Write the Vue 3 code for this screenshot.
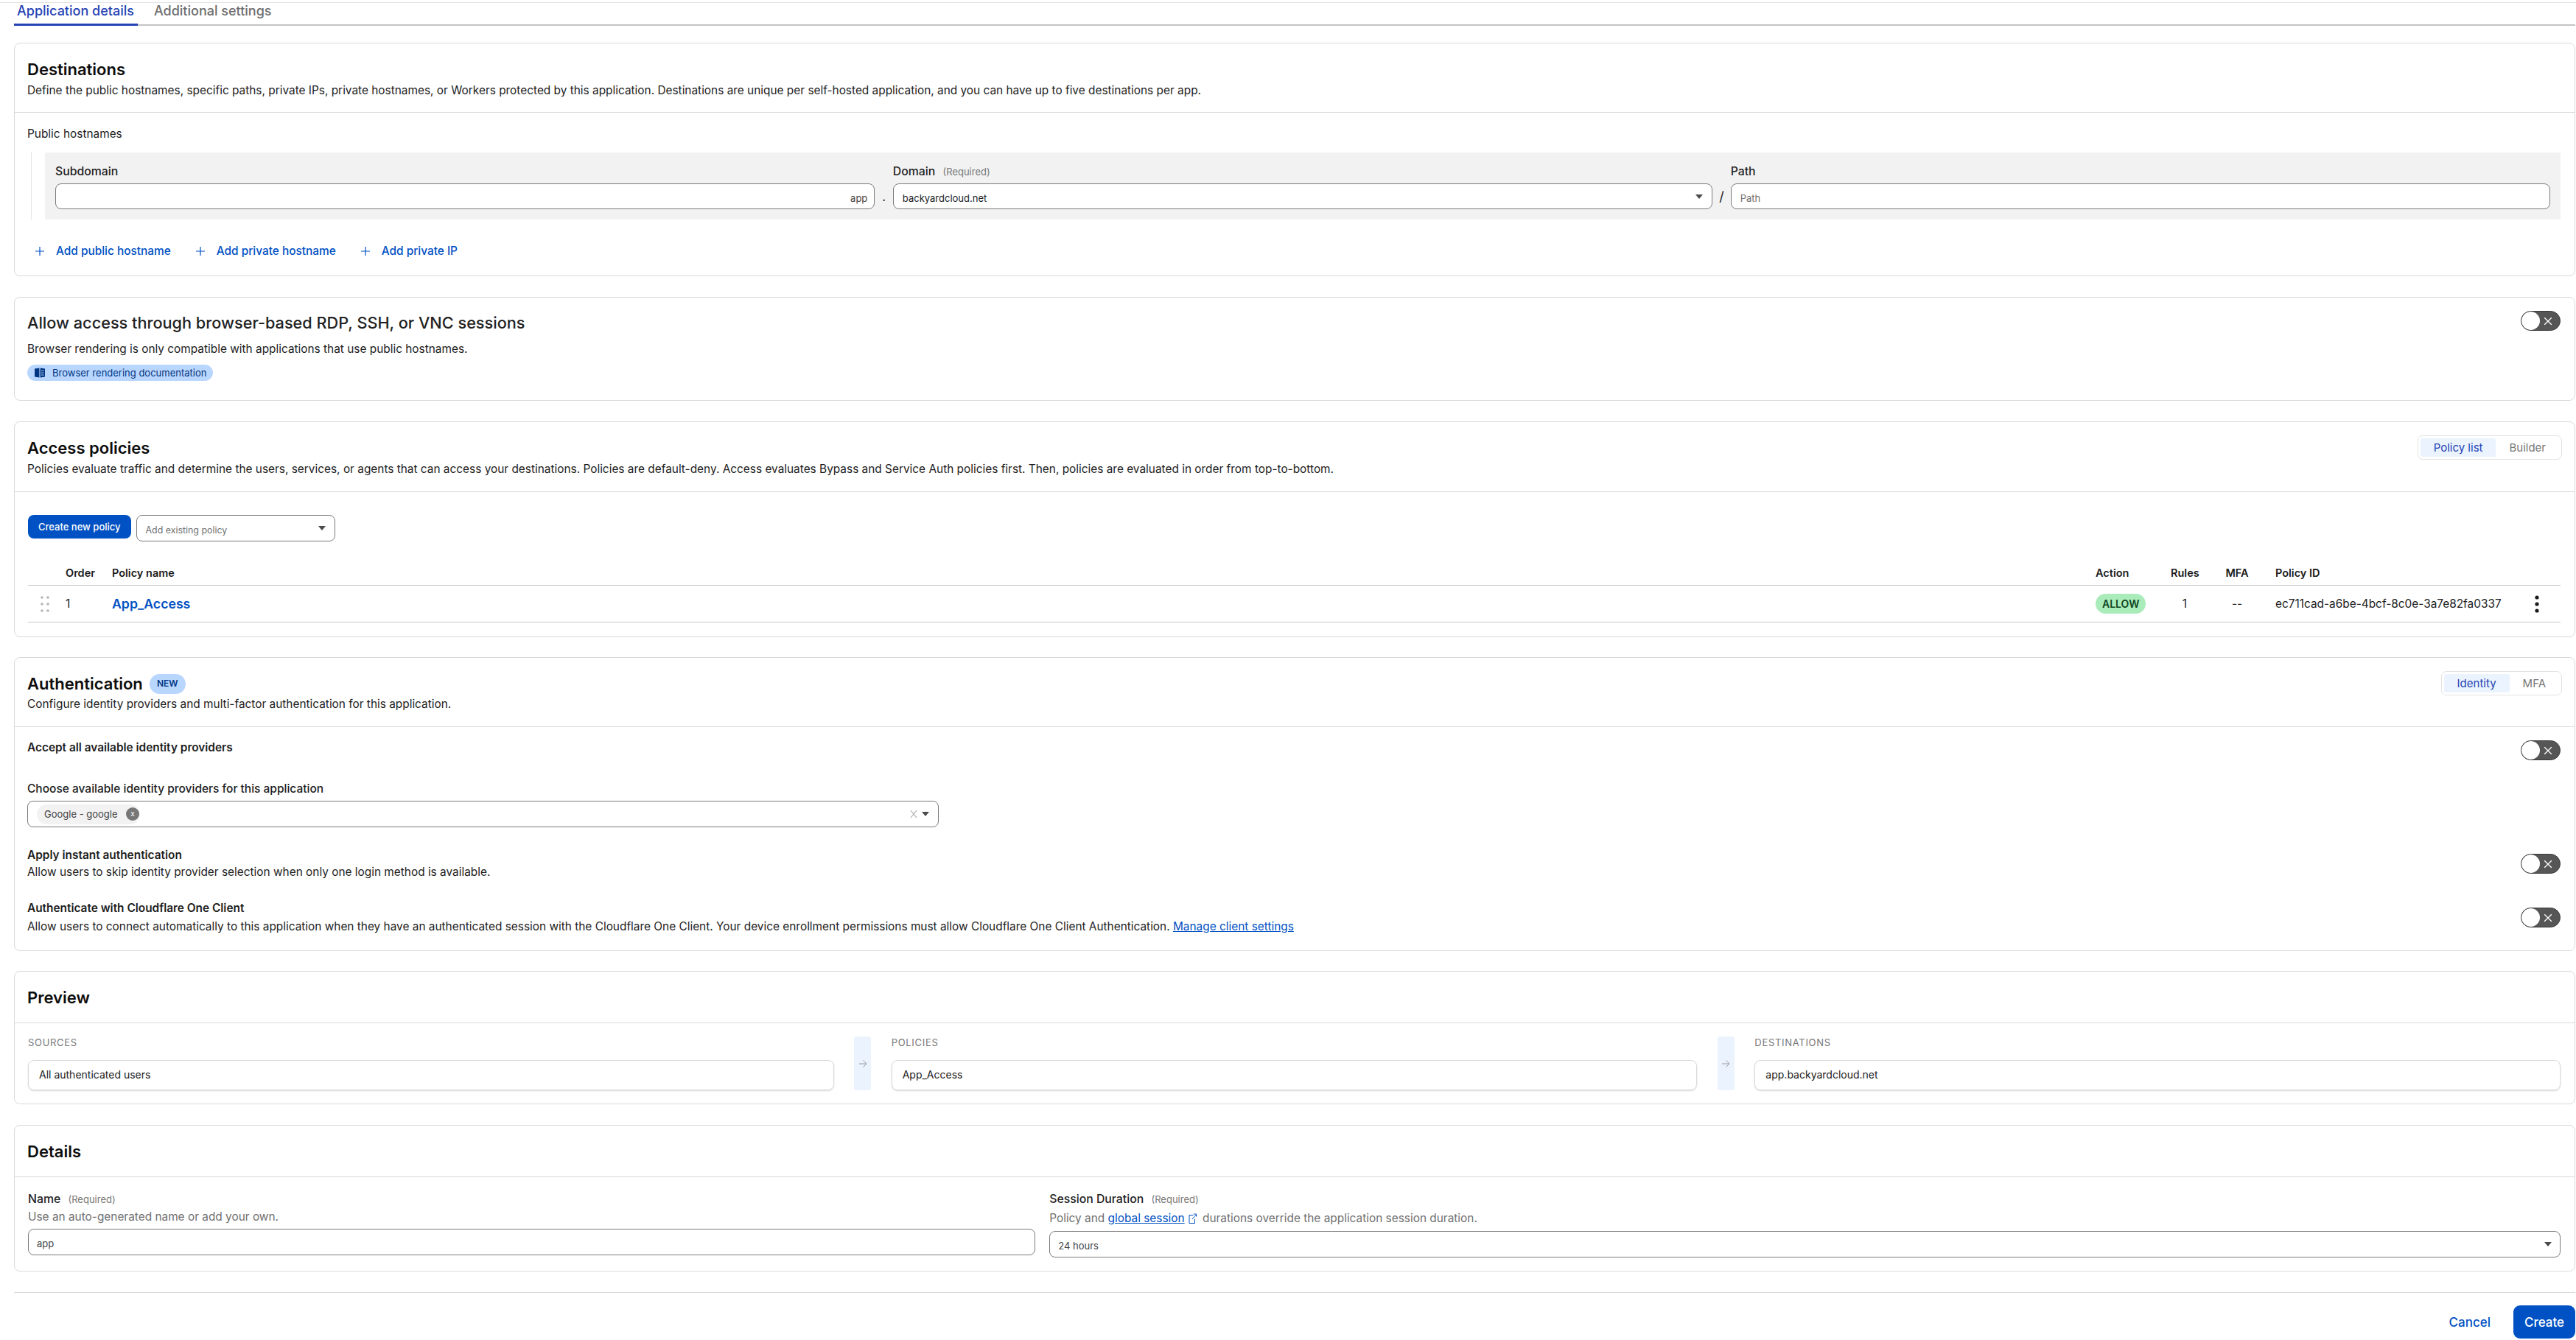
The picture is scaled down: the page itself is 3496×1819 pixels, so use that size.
<script setup>
const addLinks = ['Add public hostname', 'Add private hostname', 'Add private IP']

const previewCols = [
  { label: 'SOURCES', value: 'All authenticated users' },
  { label: 'POLICIES', value: 'App_Access' },
  { label: 'DESTINATIONS', value: 'app.backyardcloud.net' }
]
</script>

<template>
  <div class="page">
    <div class="tabs">
      <div class="tab active">Application details</div>
      <div class="tab">Additional settings</div>
    </div>

    <section class="card">
      <header class="card-head">
        <h2>Destinations</h2>
        <p>Define the public hostnames, specific paths, private IPs, private hostnames, or Workers protected by this application. Destinations are unique per self-hosted application, and you can have up to five destinations per app.</p>
      </header>
      <div class="dest-body">
        <div class="sub-label">Public hostnames</div>
        <div class="repeater">
          <div class="host-row">
            <div class="host-field">
              <label class="field-label">Subdomain</label>
              <div class="input suffixed"><span>app</span></div>
            </div>
            <span class="sep dot">.</span>
            <div class="host-field">
              <label class="field-label">Domain <em>(Required)</em></label>
              <div class="input select">
                <span>backyardcloud.net</span>
                <svg class="caret" viewBox="0 0 10 6"><path d="M0 0h10L5 6z" /></svg>
              </div>
            </div>
            <span class="sep">/</span>
            <div class="host-field">
              <label class="field-label">Path</label>
              <div class="input"><span class="placeholder">Path</span></div>
            </div>
          </div>
        </div>
        <div class="add-links">
          <a v-for="link in addLinks" :key="link" class="add-link">
            <svg viewBox="0 0 12 12"><path d="M6 0v12M0 6h12" /></svg>
            {{ link }}
          </a>
        </div>
      </div>
    </section>

    <section class="card rdp">
      <div class="rdp-main">
        <h2 class="soft">Allow access through browser-based RDP, SSH, or VNC sessions</h2>
        <p class="rdp-desc">Browser rendering is only compatible with applications that use public hostnames.</p>
        <span class="doc-tag">
          <svg viewBox="0 0 16 16"><path d="M1 2.5 7.4 1.5V14.5L1 13.5z" /><path d="M8.6 1.5 15 2.5V13.5L8.6 14.5z" /><path class="page-lines" d="M10 5h3.5M10 8h3.5M10 11h3.5" /></svg>
          Browser rendering documentation
        </span>
      </div>
      <div class="toggle"><i></i><svg viewBox="0 0 10 10"><path d="M1 1l8 8M9 1l-8 8" /></svg></div>
    </section>

    <section class="card">
      <header class="card-head tall with-switch">
        <div>
          <h2>Access policies</h2>
          <p>Policies evaluate traffic and determine the users, services, or agents that can access your destinations. Policies are default-deny. Access evaluates Bypass and Service Auth policies first. Then, policies are evaluated in order from top-to-bottom.</p>
        </div>
        <div class="segmented">
          <span class="seg on">Policy list</span>
          <span class="seg">Builder</span>
        </div>
      </header>
      <div class="policies-body">
        <div class="policy-actions">
          <button class="btn-primary">Create new policy</button>
          <div class="input select existing">
            <span class="placeholder">Add existing policy</span>
            <svg class="caret" viewBox="0 0 10 6"><path d="M0 0h10L5 6z" /></svg>
          </div>
        </div>
        <div class="policy-table">
          <div class="policy-row head">
            <span></span>
            <span>Order</span>
            <span>Policy name</span>
            <span>Action</span>
            <span class="rules">Rules</span>
            <span class="mfa">MFA</span>
            <span>Policy ID</span>
            <span></span>
          </div>
          <div class="policy-row">
            <svg class="grip" viewBox="0 0 12 24"><g><circle cx="2" cy="3" r="1.8" /><circle cx="10" cy="3" r="1.8" /><circle cx="2" cy="12" r="1.8" /><circle cx="10" cy="12" r="1.8" /><circle cx="2" cy="21" r="1.8" /><circle cx="10" cy="21" r="1.8" /></g></svg>
            <span>1</span>
            <a class="policy-name">App_Access</a>
            <span><b class="allow">ALLOW</b></span>
            <span class="rules">1</span>
            <span class="mfa">--</span>
            <span>ec711cad-a6be-4bcf-8c0e-3a7e82fa0337</span>
            <svg class="kebab" viewBox="0 0 6 24"><circle cx="3" cy="3" r="2.6" /><circle cx="3" cy="12" r="2.6" /><circle cx="3" cy="21" r="2.6" /></svg>
          </div>
        </div>
      </div>
    </section>

    <section class="card close-gap">
      <header class="card-head with-switch">
        <div>
          <h2>Authentication <span class="new-badge">NEW</span></h2>
          <p class="tight">Configure identity providers and multi-factor authentication for this application.</p>
        </div>
        <div class="segmented">
          <span class="seg on">Identity</span>
          <span class="seg">MFA</span>
        </div>
      </header>
      <div class="auth-body">
        <div class="setting first">
          <strong>Accept all available identity providers</strong>
          <div class="toggle"><i></i><svg viewBox="0 0 10 10"><path d="M1 1l8 8M9 1l-8 8" /></svg></div>
        </div>
        <label class="idp-label">Choose available identity providers for this application</label>
        <div class="input idp-select">
          <span class="idp-tag">Google - google <i class="idp-x">x</i></span>
          <svg class="clear" viewBox="0 0 10 10"><path d="M1 0l8 10M9 0l-8 10" /></svg>
          <svg class="caret" viewBox="0 0 10 6"><path d="M0 0h10L5 6z" /></svg>
        </div>
        <div class="setting instant">
          <div>
            <strong>Apply instant authentication</strong>
            <p>Allow users to skip identity provider selection when only one login method is available.</p>
          </div>
          <div class="toggle"><i></i><svg viewBox="0 0 10 10"><path d="M1 1l8 8M9 1l-8 8" /></svg></div>
        </div>
        <div class="setting client">
          <div>
            <strong>Authenticate with Cloudflare One Client</strong>
            <p>Allow users to connect automatically to this application when they have an authenticated session with the Cloudflare One Client. Your device enrollment permissions must allow Cloudflare One Client Authentication. <a class="link">Manage client settings</a></p>
          </div>
          <div class="toggle"><i></i><svg viewBox="0 0 10 10"><path d="M1 1l8 8M9 1l-8 8" /></svg></div>
        </div>
      </div>
    </section>

    <section class="card close-gap">
      <header class="card-head short"><h2>Preview</h2></header>
      <div class="preview-body">
        <template v-for="(col, i) in previewCols" :key="col.label">
          <div v-if="i > 0" class="flow-arrow">
            <svg viewBox="0 0 12 12"><path d="M1 6h10M6.5 1.5 11 6l-4.5 4.5" /></svg>
          </div>
          <div class="preview-col">
            <div class="preview-label">{{ col.label }}</div>
            <div class="preview-box">{{ col.value }}</div>
          </div>
        </template>
      </div>
    </section>

    <section class="card">
      <header class="card-head short"><h2>Details</h2></header>
      <div class="details-body">
        <div>
          <label class="field-label">Name <em>(Required)</em></label>
          <p class="hint">Use an auto-generated name or add your own.</p>
          <div class="input"><span class="small-value">app</span></div>
        </div>
        <div>
          <label class="field-label">Session Duration <em>(Required)</em></label>
          <p class="hint session-hint">
            Policy and <a class="link">global session</a>
            <svg class="ext" viewBox="0 0 12 14"><path d="M7 2.5H1.5v11H9V8M5.5 8 11 1.5M7.5 1H11v3.5" /></svg>
            durations override the application session duration.
          </p>
          <div class="input select">
            <span class="small-value">24 hours</span>
            <svg class="caret" viewBox="0 0 10 6"><path d="M0 0h10L5 6z" /></svg>
          </div>
        </div>
      </div>
    </section>

    <footer class="footer">
      <a class="cancel">Cancel</a>
      <button class="btn-primary create">Create</button>
    </footer>
  </div>
</template>

<style>
html, body {
  margin: 0;
  background: #fff;
}
</style>

<style scoped>
.page {
  width: 3496px;
  height: 1819px;
  overflow: hidden;
  box-sizing: border-box;
  padding: 0 1px 0 19px;
  font-family: Inter, "Noto Sans", sans-serif;
  font-size: 15.4px;
  color: #1d1d1d;
  background: #fff;
  position: relative;
}

/* tabs */
.tabs {
  display: flex;
  gap: 18px;
  height: 35px;
  box-sizing: border-box;
  padding-top: 3px;
  border-bottom: 2px solid #c4c4c4;
}
.page::before {
  content: "";
  position: absolute;
  left: 0;
  right: 0;
  top: 3px;
  height: 1px;
  background: #e2e2e2;
}
.tab {
  padding: 0 5px 0 4px;
  font-size: 18px;
  font-weight: 500;
  line-height: 24px;
  color: #6e6e6e;
  height: 32px;
  box-sizing: border-box;
}
.tab.active {
  color: #2444b4;
  border-bottom: 3px solid #2444b4;
}

/* cards */
.card {
  margin-top: 28px;
  border: 1px solid #d9d9d9;
  border-radius: 8px;
  box-sizing: border-box;
}
.tabs + .card {
  margin-top: 23px;
}
.card.close-gap {
  margin-top: 27px;
}
.card-head {
  box-sizing: border-box;
  height: 94px;
  padding: 20px 17px 0;
  border-bottom: 1px solid #d9d9d9;
}
.card-head.tall {
  height: 95px;
}
.card-head.short {
  height: 70px;
}
.with-switch {
  display: flex;
  justify-content: space-between;
  align-items: flex-start;
}
h2 {
  margin: 0;
  font-size: 22px;
  line-height: 30px;
  font-weight: 600;
  color: #0d0d0d;
  display: flex;
  align-items: center;
  gap: 9px;
}
h2.soft {
  font-size: 21.7px;
  font-weight: 500;
  color: #222;
}
p {
  margin: 0;
  line-height: 20px;
}
.card-head p {
  margin-top: 4px;
}
.card-head p.tight {
  margin-top: 3px;
}

/* destinations */
.dest-body {
  padding: 19px 19px 23px 17px;
}
.sub-label {
  line-height: 20px;
}
.repeater {
  margin: 15px 0 0 5px;
  padding-left: 18px;
  border-left: 1px solid #e4e4e4;
}
.host-row {
  display: flex;
  align-items: flex-end;
  height: 91px;
  box-sizing: border-box;
  padding: 0 14px 14px;
  background: #f2f2f2;
}
.host-field {
  flex: 1;
  min-width: 0;
}
.field-label {
  display: block;
  font-size: 15.8px;
  font-weight: 500;
  line-height: 20px;
  color: #222;
}
.field-label em {
  margin-left: 6px;
  font-size: 13px;
  font-style: normal;
  font-weight: 400;
  color: #777;
}
.host-field .field-label {
  margin-bottom: 6px;
}
.sep {
  flex: 0 0 24.5px;
  text-align: center;
  line-height: 35px;
  font-size: 18px;
}
.input {
  box-sizing: border-box;
  height: 35px;
  display: flex;
  align-items: center;
  padding: 0 12px;
  background: #fff;
  border: 1px solid #7a7a7a;
  border-radius: 8px;
  font-size: 13px;
}
/* the values sit a little below the middle of the box */
.input > span:not(.idp-tag) {
  padding-top: 4px;
}
.input.suffixed {
  justify-content: flex-end;
  padding-right: 9px;
  color: #444;
}
.input.select {
  justify-content: space-between;
}
.placeholder {
  color: #707070;
}
.caret {
  width: 10px;
  height: 6px;
  fill: #4a4a4a;
  flex: none;
}
.add-links {
  display: flex;
  gap: 34px;
  margin: 33px 0 0 11px;
}
.add-link {
  display: flex;
  align-items: center;
  gap: 16px;
  font-size: 15.4px;
  font-weight: 500;
  line-height: 20px;
  color: #0051c3;
}
.add-link svg {
  width: 12px;
  height: 12px;
  fill: none;
  stroke: #0051c3;
  stroke-width: 1.2;
}

/* browser rendering */
.rdp {
  height: 141px;
  padding: 19px 19px 0 17px;
  display: flex;
  justify-content: space-between;
  align-items: flex-start;
}
.rdp-desc {
  margin-top: 11px;
}
.doc-tag {
  display: inline-flex;
  align-items: center;
  gap: 9px;
  height: 22px;
  margin-top: 11px;
  padding: 0 9px 0 9px;
  border-radius: 11px;
  background: #b9d6ff;
  color: #003681;
  font-size: 13px;
}
.doc-tag svg {
  width: 16px;
  height: 16px;
  fill: #003681;
}
.doc-tag .page-lines {
  fill: none;
  stroke: #b9d6ff;
  stroke-width: 1;
}
.toggle {
  flex: none;
  box-sizing: border-box;
  width: 54px;
  height: 27px;
  display: flex;
  align-items: center;
  justify-content: space-between;
  padding-right: 10px;
  border: 1px solid #3a3a3a;
  border-radius: 14px;
  background: #565656;
  overflow: hidden;
}
.rdp .toggle {
  margin-top: -1px;
}
.toggle i {
  width: 25px;
  height: 25px;
  border-radius: 50%;
  background: #fff;
}
.toggle svg {
  width: 12px;
  height: 12px;
  fill: none;
  stroke: #fff;
  stroke-width: 1.1;
}

/* switch in the head */
.segmented {
  display: flex;
  flex: none;
  box-sizing: border-box;
  height: 33px;
  margin: -2px 0 0 0;
  padding: 3px;
  border: 1px solid #e2e2e2;
  border-radius: 7px;
}
.seg {
  display: flex;
  align-items: center;
  padding: 0 18px;
  font-size: 15px;
  color: #777;
}
.seg.on {
  background: #ebf3fe;
  color: #2444b4;
  border-radius: 2px;
}

/* policies */
.policies-body {
  padding: 31px 19px 19px 18px;
}
.policy-actions {
  display: flex;
  align-items: flex-start;
  gap: 7px;
}
.btn-primary {
  height: 32px;
  padding: 0 14px;
  border: 0;
  border-radius: 8px;
  background: #0051c3;
  color: #fff;
  font-family: inherit;
  font-size: 13px;
  font-weight: 500;
}
.existing {
  width: 270px;
  height: 36px;
  padding-right: 12px;
  font-size: 12.4px;
}
.policy-table {
  margin-top: 33px;
}
.policy-row {
  display: grid;
  grid-template-columns: 51px 63px 2692px 102px 74px 68px 1fr 30px;
  align-items: center;
  height: 49px;
  border-bottom: 1px solid #c8c8c8;
}
.policy-row.head {
  height: 26px;
  align-items: start;
  font-size: 14.5px;
  font-weight: 600;
  line-height: 20px;
  color: #1a1a1a;
}
.rules {
  width: 38px;
  text-align: center;
}
.mfa {
  width: 32px;
  text-align: center;
}
.grip {
  width: 12px;
  height: 24px;
  margin-left: 17px;
  fill: #b4b4b4;
}
.policy-name {
  color: #0051c3;
  font-size: 17.7px;
  font-weight: 600;
}
.allow {
  display: inline-flex;
  align-items: center;
  height: 27px;
  padding: 0 9px;
  border-radius: 14px;
  background: #a9ecba;
  color: #11451f;
  font-size: 14px;
  font-weight: 600;
}
.kebab {
  width: 6px;
  height: 24px;
  margin-left: -5px;
  fill: #1a1a1a;
}

/* authentication */
.new-badge {
  display: inline-flex;
  align-items: center;
  justify-content: center;
  width: 49px;
  height: 27px;
  border-radius: 14px;
  background: #b9d6ff;
  color: #003681;
  font-size: 12px;
  font-weight: 600;
}
.auth-body {
  padding: 18px 19px 22px 17px;
}
.setting {
  display: flex;
  justify-content: space-between;
  align-items: center;
}
.setting.first {
  align-items: flex-start;
  line-height: 22px;
}
strong {
  display: block;
  font-size: 15.4px;
  font-weight: 600;
  line-height: 20px;
  color: #1d1d1d;
}
.idp-label {
  display: block;
  margin-top: 29px;
  font-size: 15.5px;
  font-weight: 500;
  line-height: 20px;
}
.idp-select {
  position: relative;
  width: 1237px;
  height: 36px;
  margin-top: 6px;
  padding: 0 12px 0 12px;
}
.idp-tag {
  display: inline-flex;
  align-items: center;
  justify-content: space-between;
  width: 140px;
  height: 27px;
  box-sizing: border-box;
  padding: 0 1px 0 10px;
  border-radius: 14px;
  background: #f2f2f2;
  color: #444;
  font-size: 13px;
}
.idp-x {
  width: 18px;
  height: 18px;
  border-radius: 50%;
  background: #777;
  color: #fff;
  font-size: 10px;
  font-style: normal;
  line-height: 17px;
  text-align: center;
}
.clear {
  width: 10px;
  height: 12px;
  margin-left: auto;
  margin-right: 6px;
  fill: none;
  stroke: #aaa;
  stroke-width: 1.2;
}
.instant {
  margin-top: 28px;
}
.client {
  margin-top: 29px;
}
.setting.instant p {
  margin-top: 3px;
}
.setting.client p {
  margin-top: 5px;
}
.link {
  color: #0051c3;
  text-decoration: underline;
}

/* preview */
.preview-body {
  display: flex;
  gap: 27.5px;
  padding: 18px 19px 18px 18px;
}
.preview-col {
  flex: 1;
  min-width: 0;
}
.preview-label {
  font-size: 13px;
  line-height: 16px;
  letter-spacing: 0.7px;
  color: #777;
}
.preview-box {
  box-sizing: border-box;
  height: 41px;
  margin-top: 16px;
  padding: 0 14px;
  line-height: 38px;
  border: 1px solid #d9d9d9;
  border-radius: 8px;
  box-shadow: 0 1px 2px rgba(0, 0, 0, 0.15);
  font-size: 14px;
  color: #1a1a1a;
}
.flow-arrow {
  flex: 0 0 23px;
  display: flex;
  align-items: center;
  justify-content: center;
  background: #ebf3fe;
  border-radius: 3px;
}
.flow-arrow svg {
  width: 12px;
  height: 12px;
  fill: none;
  stroke: #9a9a9a;
  stroke-width: 1;
}

/* details */
.details-body {
  display: grid;
  grid-template-columns: 2fr 3fr;
  gap: 19px;
  padding: 20px 19px 18px 18px;
}
.hint {
  margin: 4px 0 6px;
  color: #707070;
  line-height: 20px;
}
.session-hint {
  margin: 6px 0 7px;
}
.small-value {
  font-size: 13px;
  color: #444;
}
.ext {
  width: 13px;
  height: 14px;
  vertical-align: -2px;
  margin: 0 3px 0 4px;
  fill: none;
  stroke: #0051c3;
  stroke-width: 1;
}
.details-body .input {
  height: 36px;
  padding: 0 11px;
}

/* footer */
.footer {
  display: flex;
  justify-content: flex-end;
  align-items: center;
  gap: 31px;
  height: 63px;
  margin-top: 28px;
  padding-top: 17px;
  box-sizing: border-box;
  border-top: 1px solid #d9d9d9;
}
.cancel {
  color: #0051c3;
  font-size: 17px;
  font-weight: 500;
}
.btn-primary.create {
  width: 84px;
  height: 45px;
  padding: 0;
  font-size: 17px;
  border-radius: 9px;
}
</style>
